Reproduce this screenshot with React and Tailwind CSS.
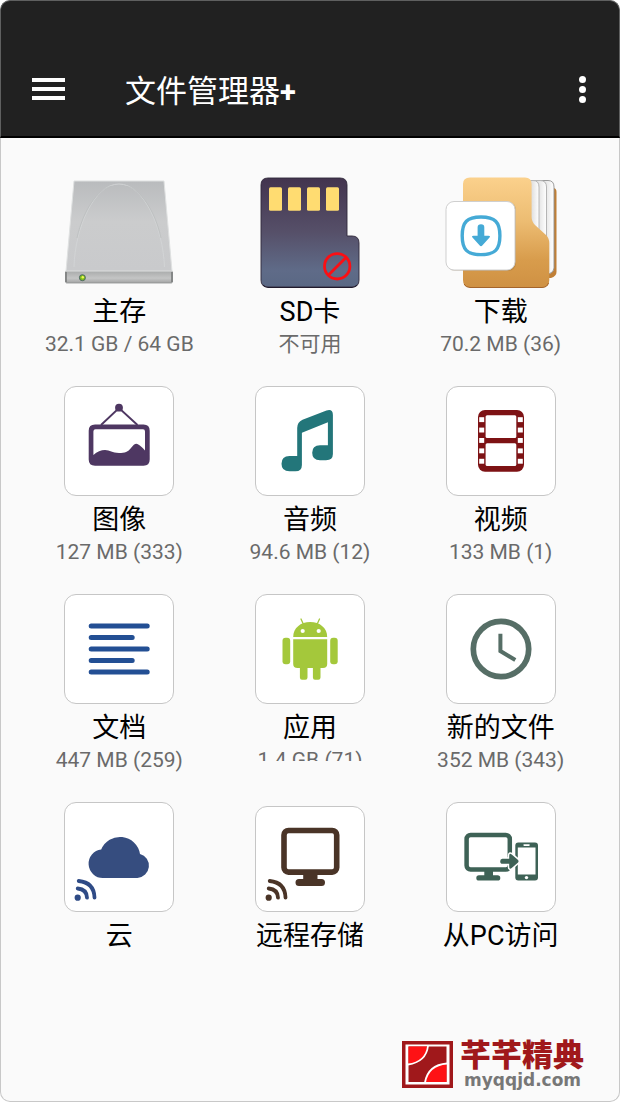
import React from "react";
import clsx from "clsx";

/* Tile artwork, every drawing uses a 110 x 110 grid */

function DriveIcon() {
  return (
    <svg viewBox="0 0 110 110" className="size-full overflow-visible" aria-hidden="true">
      <defs>
        <linearGradient id="driveTop" x1="0" y1="0" x2="0" y2="1">
          <stop offset="0" stopColor="#b9bbbd" />
          <stop offset="0.45" stopColor="#cbcccd" />
          <stop offset="1" stopColor="#c9cacc" />
        </linearGradient>
        <linearGradient id="driveFront" x1="0" y1="0" x2="0" y2="1">
          <stop offset="0" stopColor="#a9abab" />
          <stop offset="0.6" stopColor="#c4c5c5" />
          <stop offset="1" stopColor="#a3a4a4" />
        </linearGradient>
      </defs>
      <path d="M10 3H100L108 93H2Z" fill="url(#driveTop)" stroke="#dfe1e1" strokeWidth="1" />
      <path d="M10 89C11 50 30 6 55 6S99 50 100.500 89" fill="none" stroke="#d3d5d6" strokeWidth="0.900" />
      <path d="M13 60C19 32 34 11 48 8M97 60C91 32 76 11 62 8" fill="none" stroke="#b7babb" strokeWidth="0.600" />
      <rect x="1.700" y="93" width="106.600" height="12" rx="1" fill="url(#driveFront)" stroke="#8d8f8f" strokeWidth="0.800" />
      <path d="M2 93H108" stroke="#eceded" strokeWidth="1.200" />
      <path d="M2 94V104M108 94V104" stroke="#777979" strokeWidth="1.500" />
      <circle cx="18.400" cy="99.700" r="3" fill="#7fc21a" stroke="#4c6468" strokeWidth="1" />
      <circle cx="18.800" cy="99.300" r="1.200" fill="#eef35a" />
    </svg>
  );
}

function SdCardIcon() {
  return (
    <svg viewBox="0 0 110 110" className="size-full overflow-visible" aria-hidden="true">
      <defs>
        <linearGradient id="sdBody" x1="0" y1="0" x2="0" y2="1">
          <stop offset="0" stopColor="#43344e" />
          <stop offset="0.5" stopColor="#565069" />
          <stop offset="0.85" stopColor="#5f6b88" />
          <stop offset="1" stopColor="#5a6884" />
        </linearGradient>
      </defs>
      <path
        d="M13 0H85Q92 0 92 7V58H97Q104 58 104 65V102Q104 109 97 109H13Q6 109 6 102V7Q6 0 13 0Z"
        fill="url(#sdBody)"
        stroke="#30283a"
        strokeWidth="0.900"
      />
      <path d="M8 107Q10 109.500 13 109.500H97Q100 109.500 102 107" fill="none" stroke="#201a2c" strokeWidth="1.200" />
      <g fill="#ffdc71">
        <rect x="14" y="9.300" width="13" height="23.400" rx="1.500" />
        <rect x="33" y="9.300" width="13" height="23.400" rx="1.500" />
        <rect x="52" y="9.300" width="13" height="23.400" rx="1.500" />
        <rect x="71" y="9.300" width="13" height="23.400" rx="1.500" />
      </g>
      <g fill="none" stroke="#fb0f14" strokeWidth="2.800">
        <circle cx="82.200" cy="88.300" r="12.700" />
        <path d="M73.500 97L91 79.500" />
      </g>
    </svg>
  );
}

function DownloadIcon() {
  return (
    <svg viewBox="0 0 110 110" className="size-full overflow-visible" aria-hidden="true">
      <defs>
        <linearGradient id="folderFront" x1="0" y1="0" x2="0" y2="1">
          <stop offset="0" stopColor="#fbd18c" />
          <stop offset="0.4" stopColor="#ecbc72" />
          <stop offset="0.75" stopColor="#d89c4c" />
          <stop offset="1" stopColor="#cf9143" />
        </linearGradient>
        <linearGradient id="paper" x1="0" y1="0" x2="1" y2="0">
          <stop offset="0.7" stopColor="#d5d5d5" />
          <stop offset="1" stopColor="#ffffff" />
        </linearGradient>
      </defs>
      <path d="M60 10H107Q110.500 10 110.500 14V94Q110.500 98 105 100H60Z" fill="#c07f36" />
      <path d="M60 2.500H102Q108 2.500 108 9V90Q108 94 103 96H60Z" fill="url(#paper)" stroke="#909090" strokeWidth="0.900" />
      <path d="M60 2.500H94Q100.500 2.500 100.500 9V85H60Z" fill="url(#paper)" stroke="#b5b5b5" strokeWidth="1" />
      <path d="M60 2.500H87Q93 2.500 93 9V80H60Z" fill="url(#paper)" stroke="#b5b5b5" strokeWidth="1" />
      <path
        d="M24 -0.500H79Q85.600 -0.500 85.600 6V39Q85.600 43.500 89 47L100 57Q103.300 60.500 103.300 65V102Q103.300 109.500 96 109.500H24Q17 109.500 17 102V6Q17 -0.500 24 -0.500Z"
        fill="url(#folderFront)"
      />
      <path d="M18 106Q20 109.500 24 109.500H96Q101 109.500 102.500 105" fill="none" stroke="#a5642a" strokeWidth="1" />
      <rect x="1" y="24" width="69" height="69" rx="8" fill="#7a5a30" opacity="0.250" />
      <rect x="0" y="23.500" width="69" height="68.500" rx="8" fill="#fff" stroke="#cfcfcf" strokeWidth="1" />
      <path
        d="M35 39C49 39 53.900 44 53.900 57.800S49 76.600 35 76.600S16.200 71.600 16.200 57.800S21 39 35 39Z"
        fill="none"
        stroke="#45aad6"
        strokeWidth="3.400"
      />
      <path
        d="M31.600 49.500Q31.600 46.300 35 46.300T38.300 49.500V57.700H42.500Q45 57.700 43.300 59.800L36.500 67.300Q35 69 33.500 67.300L26.700 59.800Q25 57.700 27.500 57.700H31.600Z"
        fill="#45aad6"
      />
    </svg>
  );
}

function PictureArt() {
  return (
    <g fill="#4e3762">
      <circle cx="55" cy="21.700" r="3.900" />
      <path d="M37 39L55 22L73.500 39" fill="none" stroke="#4e3762" strokeWidth="1.900" />
      <path
        fillRule="evenodd"
        d="M31 38.500H79.500Q85.700 38.500 85.700 44.700V73.500Q85.700 79.700 79.500 79.700H31Q24.700 79.700 24.700 73.500V44.700Q24.700 38.500 31 38.500ZM31.500 43.300Q29.400 43.300 29.400 45.400V69Q35 64 41 64C46 64 48 67 55 67C61 67 64 66 67 62Q70 57.700 72.400 57.700Q75 57.700 81 64.500V45.400Q81 43.300 79 43.300Z"
      />
    </g>
  );
}

function MusicArt() {
  return (
    <g fill="#23767a">
      <path d="M42.200 42Q42.200 36 47.500 33.700L71.500 24.500Q77.900 22.500 77.900 29V68Q77.900 74.200 71 74.200H65Q57.200 74.200 57.200 66.700T65 59.200H72.900V36.300L46.900 46.700V79Q46.900 85.300 40.500 85.300H34.500Q26.500 85.300 26.500 77.700T34.500 70H42.200Z" />
    </g>
  );
}

function FilmArt() {
  return (
    <g>
      <rect x="32" y="24" width="46" height="61.700" rx="7" fill="#7d1214" />
      <g fill="#fff">
        <rect x="39.600" y="29.300" width="30.700" height="22.700" rx="1.500" />
        <rect x="39.600" y="57.300" width="30.700" height="22.700" rx="1.500" />
        {[31.2, 41.6, 52, 62.4, 72.8].map((y) => (
          <React.Fragment key={y}>
            <rect x="33.200" y={y} width="5" height="4.900" />
            <rect x="71.800" y={y} width="5" height="4.900" />
          </React.Fragment>
        ))}
      </g>
    </g>
  );
}

function DocumentArt() {
  return (
    <path
      d="M27.200 32H83.200M27.200 43.600H68.200M27.200 55H83.200M27.200 66.600H68.200M27.200 78H83.200"
      fill="none"
      stroke="#234f94"
      strokeWidth="5"
      strokeLinecap="round"
    />
  );
}

function AndroidArt() {
  return (
    <g fill="#a4c83b">
      <path d="M38.200 43C38.200 34 45.500 28 55.200 28S72.200 34 72.200 43Z" />
      <path d="M46 25L48.500 30.500M64.500 25L62 30.500" stroke="#a4c83b" strokeWidth="1.300" strokeLinecap="round" />
      <circle cx="47.700" cy="37" r="2.100" fill="#fff" />
      <circle cx="63.700" cy="37" r="2.100" fill="#fff" />
      <path d="M38.200 45.300H72.200V70Q72.200 74 68 74H42.500Q38.200 74 38.200 70Z" />
      <rect x="27.500" y="43.700" width="7.700" height="26.600" rx="3" />
      <rect x="75.200" y="43.700" width="7.500" height="26.600" rx="3" />
      <path d="M44.900 72H52.500V83.500Q52.500 85.700 50.300 85.700H47Q44.900 85.700 44.900 83.500ZM57.900 72H65.500V83.500Q65.500 85.700 63.300 85.700H60Q57.900 85.700 57.900 83.500Z" />
    </g>
  );
}

function ClockArt() {
  return (
    <g fill="none" stroke="#566e66">
      <circle cx="55" cy="55" r="27.700" strokeWidth="5.700" />
      <path d="M54.400 39.700V57L69.300 66" strokeWidth="4" />
    </g>
  );
}

function SignalArt({ color }) {
  return (
    <g fill="none" stroke={color} strokeWidth="3.800" strokeLinecap="round">
      <circle cx="13.700" cy="95.700" r="3.100" fill={color} stroke="none" />
      <path d="M13.700 86.500Q22.700 87.300 23 95.700M14.700 79Q30 80.500 30.500 95.500" />
    </g>
  );
}

function CloudArt() {
  return (
    <g>
      <path
        d="M39 76A14.300 14.300 0 0 1 37.200 47.500A20.300 20.300 0 0 1 76 51.900A12.300 12.300 0 0 1 73.400 76Z"
        fill="#364d7f"
      />
      <SignalArt color="#2f4b86" />
    </g>
  );
}

function RemoteArt() {
  return (
    <g>
      <rect x="29" y="28.500" width="52.700" height="41.600" rx="4.500" fill="none" stroke="#4a3427" strokeWidth="5.600" />
      <path d="M48.200 71H62.500V77H66.500Q70 77 70 80.500T66.500 84H44Q40.500 84 40.500 80.500T44 77H48.200Z" fill="#4a3427" />
      <SignalArt color="#4a3427" />
    </g>
  );
}

function PcArt() {
  return (
    <g fill="#3e6256">
      <rect x="20.600" y="33" width="43.200" height="34.600" rx="4" fill="none" stroke="#3e6256" strokeWidth="4.500" />
      <path d="M38.300 69H47V73.200H51.500Q54.300 73.200 54.300 75.900T51.500 78.500H33Q30.300 78.500 30.300 75.900T33 73.200H38.300Z" />
      <rect x="69.300" y="40.500" width="22.700" height="38" rx="3" />
      <rect x="71.800" y="45.500" width="17.700" height="27" fill="#fff" />
      <rect x="77.300" y="42.300" width="6.500" height="1.600" rx="0.800" fill="#fff" />
      <circle cx="80.500" cy="75.600" r="1.700" fill="#fff" />
      <path
        d="M56.500 56.700H63.200V53.700Q63.200 50.700 65.700 52.400L71.800 57.700Q73.300 59.200 71.800 60.700L65.700 66.100Q63.200 67.700 63.200 64.700V61.800H56.500Q54.200 61.800 54.200 59.200T56.500 56.700Z"
        stroke="#fff"
        strokeWidth="3"
        paintOrder="stroke"
      />
    </g>
  );
}

const items = [
  { id: "main", title: "主存", detail: "32.1 GB / 64 GB", Icon: DriveIcon },
  { id: "sd", title: "SD卡", detail: "不可用", Icon: SdCardIcon },
  { id: "download", title: "下载", detail: "70.2 MB (36)", Icon: DownloadIcon },
  { id: "images", title: "图像", detail: "127 MB (333)", Art: PictureArt },
  { id: "audio", title: "音频", detail: "94.6 MB (12)", Art: MusicArt },
  { id: "video", title: "视频", detail: "133 MB (1)", Art: FilmArt },
  { id: "docs", title: "文档", detail: "447 MB (259)", Art: DocumentArt },
  { id: "apps", title: "应用", detail: "1.4 GB (71)", Art: AndroidArt, clipped: true },
  { id: "recent", title: "新的文件", detail: "352 MB (343)", Art: ClockArt },
  { id: "cloud", title: "云", Art: CloudArt },
  { id: "remote", title: "远程存储", Art: RemoteArt, short: true },
  { id: "pc", title: "从PC访问", Art: PcArt },
];

function Tile({ item }) {
  const { title, detail, Icon, Art, clipped, short } = item;

  return (
    <button type="button" className="flex flex-col items-center justify-start">
      <span className="flex size-[110px] flex-col justify-end">
        {Icon ? (
          <Icon />
        ) : (
          <span
            className={clsx(
              "block w-full rounded-xl border border-[#c6c6c6] bg-white",
              short ? "h-[106px]" : "h-full"
            )}
          >
            <svg viewBox={short ? "1 5 108 104" : "1 1 108 108"} className="size-full" aria-hidden="true">
              <Art />
            </svg>
          </span>
        )}
      </span>
      <span className="mt-2 whitespace-nowrap text-[27px] leading-8 text-black">{title}</span>
      {detail && (
        <span
          className={clsx(
            "whitespace-nowrap text-[21px] leading-8 text-[#6a6a6a]",
            clipped && "h-[17px] overflow-hidden"
          )}
        >
          {detail}
        </span>
      )}
    </button>
  );
}

function SiteLogo() {
  return (
    <svg viewBox="0 0 51 47" className="h-[47px] w-[51px]" aria-hidden="true">
      <rect width="51" height="47" fill="#a0181b" />
      <rect x="3.500" y="3.500" width="44" height="40" fill="#fff" />
      <rect x="6.500" y="5.500" width="38" height="35.500" fill="#a0181b" />
      <path d="M6.500 5.500H25Q24 21 6.500 23Z" fill="#fe1215" />
      <path d="M44.500 23Q27 24 23.500 41H44.500Z" fill="#fe1215" />
      <path d="M26 5Q24 21 6 23.500M45 22.500Q26 24 23 41.500" fill="none" stroke="#fff" strokeWidth="1.800" />
    </svg>
  );
}

export default function App() {
  return (
    <div className="flex min-h-screen flex-col bg-white font-[Roboto,'Noto_Sans_CJK_SC',sans-serif]">
      {/* Header */}
      <header className="flex items-center rounded-t-[10px] border border-b-2 border-[#5f6060] border-b-black bg-[#212121] pt-[62px] pr-[25px] pb-[17px] pl-[31px] text-white">
        <button type="button" aria-label="菜单" className="flex h-14 w-[33px] flex-col justify-center gap-[5px] pb-1">
          <span className="h-1 w-full bg-white" />
          <span className="h-1 w-full bg-white" />
          <span className="h-1 w-full bg-white" />
        </button>
        <h1 className="ml-[60px] flex-1 pt-0.5 text-[31px] leading-10 font-normal">
          文件管理器<span className="text-[29px] font-bold">+</span>
        </h1>
        <button type="button" aria-label="更多" className="flex h-14 w-6 flex-col items-center justify-center gap-[3px] pb-1">
          <span className="size-[7px] rounded-full bg-white" />
          <span className="size-[7px] rounded-full bg-white" />
          <span className="size-[7px] rounded-full bg-white" />
        </button>
      </header>

      <div className="flex flex-1 flex-col rounded-b-[10px] border border-t-0 border-[#c8c8c8] bg-[#fafafa]">
        {/* Categories */}
        <main className="grid grid-cols-3 gap-y-[26px] px-[23px] pt-10">
          {items.map((item) => (
            <Tile key={item.id} item={item} />
          ))}
        </main>

        {/* Site mark */}
        <footer className="mt-auto flex items-center justify-end gap-[7px] pr-[35px] pb-[13px]">
          <SiteLogo />
          <div className="flex flex-col">
            <span className="text-[31px] leading-8 font-black text-[#a0181b]">芊芊精典</span>
            <span className="pl-1 font-['DejaVu_Sans'] text-[17px] leading-4 font-bold text-[#777777]">myqqjd.com</span>
          </div>
        </footer>
      </div>
    </div>
  );
}
